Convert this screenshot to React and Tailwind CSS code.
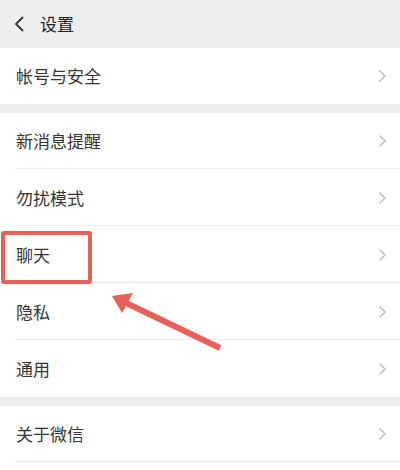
import React from "react";

const Chevron = () => (
  <svg width="9" height="14" viewBox="0 0 9 14" className="shrink-0">
    <path d="M1.5 1.5 L7 7 L1.5 12.5" fill="none" stroke="#b8b8b8" strokeWidth="1.4" />
  </svg>
);

const Row = ({ label, last }) => (
  <div className="flex h-[56px] items-center justify-between bg-white pl-4 pr-[13px] relative">
    <span className="text-[17px] text-[#353535]">{label}</span>
    <Chevron />
    {!last && <div className="absolute bottom-0 left-[15px] right-0 h-px bg-[#ececec]" />}
  </div>
);

export default function App() {
  return (
    <div
      className="relative h-[470px] w-[400px] overflow-hidden bg-white"
      style={{ fontFamily: '"Noto Sans CJK SC", "Noto Sans", sans-serif' }}
    >
      <div className="flex h-[48px] items-center bg-[#ededed] pl-[14px]">
        <svg width="11" height="16" viewBox="0 0 11 16">
          <path d="M9 1 L2 8 L9 15" fill="none" stroke="#333" strokeWidth="1.8" />
        </svg>
        <span className="ml-[15px] text-[17px] text-[#222]">设置</span>
      </div>

      <Row label="帐号与安全" last />
      <div className="h-[9px] bg-[#ededed]" />

      <div className="flex flex-col gap-px">
        <Row label="新消息提醒" />
        <Row label="勿扰模式" />
        <Row label="聊天" />
        <Row label="隐私" />
        <Row label="通用" last />
      </div>
      <div className="h-[9px] bg-[#ededed]" />
      <Row label="关于微信" />

      {/* annotation */}
      <div className="absolute left-[1px] top-[231px] h-[53px] w-[91px] rounded-[3px] border-4 border-[#e8605a]" />
      <svg className="absolute left-0 top-0" width="400" height="470">
        <line x1="220" y1="348" x2="124" y2="302" stroke="#e8605a" strokeWidth="6" />
        <polygon points="112,296 133,293 122,313" fill="#e8605a" />
      </svg>
    </div>
  );
}
